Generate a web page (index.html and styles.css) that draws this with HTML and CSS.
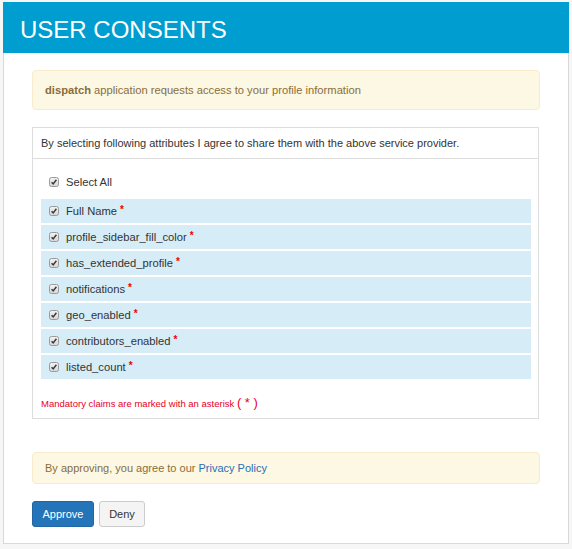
FILE: index.html
```html
<!DOCTYPE html>
<html>
<head>
<meta charset="utf-8">
<link rel="stylesheet" href="styles.css">
</head>
<body>
<div class="page">
  <div class="header"><h1 class="title">USER CONSENTS</h1></div>
  <div class="content">
    <div class="alert alert-top"><b>dispatch</b> application requests access to your profile information</div>
    <div class="panel">
      <div class="panel-heading">By selecting following attributes I agree to share them with the above service provider.</div>
      <div class="panel-body">
        <div class="row row-all">
          <svg class="cb" width="10" height="10" viewBox="0 0 10 10"><defs><linearGradient id="g" x1="0" y1="0" x2="0" y2="1"><stop offset="0" stop-color="#f4f4f4"/><stop offset="1" stop-color="#d6d6d6"/></linearGradient></defs><rect x="0.5" y="0.5" width="9" height="9" rx="2" fill="url(#g)" stroke="#9a9a9a"/><path d="M2.6 5.2 L4.2 6.9 L7.4 2.8" fill="none" stroke="#3a3a3a" stroke-width="1.5"/></svg>
          <span class="lbl">Select All</span>
        </div>
        <div class="row claim"><svg class="cb" width="10" height="10" viewBox="0 0 10 10"><rect x="0.5" y="0.5" width="9" height="9" rx="2" fill="url(#g)" stroke="#9a9a9a"/><path d="M2.6 5.2 L4.2 6.9 L7.4 2.8" fill="none" stroke="#3a3a3a" stroke-width="1.5"/></svg><span class="lbl">Full Name</span><span class="req">*</span></div>
        <div class="row claim"><svg class="cb" width="10" height="10" viewBox="0 0 10 10"><rect x="0.5" y="0.5" width="9" height="9" rx="2" fill="url(#g)" stroke="#9a9a9a"/><path d="M2.6 5.2 L4.2 6.9 L7.4 2.8" fill="none" stroke="#3a3a3a" stroke-width="1.5"/></svg><span class="lbl">profile_sidebar_fill_color</span><span class="req">*</span></div>
        <div class="row claim"><svg class="cb" width="10" height="10" viewBox="0 0 10 10"><rect x="0.5" y="0.5" width="9" height="9" rx="2" fill="url(#g)" stroke="#9a9a9a"/><path d="M2.6 5.2 L4.2 6.9 L7.4 2.8" fill="none" stroke="#3a3a3a" stroke-width="1.5"/></svg><span class="lbl">has_extended_profile</span><span class="req">*</span></div>
        <div class="row claim"><svg class="cb" width="10" height="10" viewBox="0 0 10 10"><rect x="0.5" y="0.5" width="9" height="9" rx="2" fill="url(#g)" stroke="#9a9a9a"/><path d="M2.6 5.2 L4.2 6.9 L7.4 2.8" fill="none" stroke="#3a3a3a" stroke-width="1.5"/></svg><span class="lbl">notifications</span><span class="req">*</span></div>
        <div class="row claim"><svg class="cb" width="10" height="10" viewBox="0 0 10 10"><rect x="0.5" y="0.5" width="9" height="9" rx="2" fill="url(#g)" stroke="#9a9a9a"/><path d="M2.6 5.2 L4.2 6.9 L7.4 2.8" fill="none" stroke="#3a3a3a" stroke-width="1.5"/></svg><span class="lbl">geo_enabled</span><span class="req">*</span></div>
        <div class="row claim"><svg class="cb" width="10" height="10" viewBox="0 0 10 10"><rect x="0.5" y="0.5" width="9" height="9" rx="2" fill="url(#g)" stroke="#9a9a9a"/><path d="M2.6 5.2 L4.2 6.9 L7.4 2.8" fill="none" stroke="#3a3a3a" stroke-width="1.5"/></svg><span class="lbl">contributors_enabled</span><span class="req">*</span></div>
        <div class="row claim"><svg class="cb" width="10" height="10" viewBox="0 0 10 10"><rect x="0.5" y="0.5" width="9" height="9" rx="2" fill="url(#g)" stroke="#9a9a9a"/><path d="M2.6 5.2 L4.2 6.9 L7.4 2.8" fill="none" stroke="#3a3a3a" stroke-width="1.5"/></svg><span class="lbl">listed_count</span><span class="req">*</span></div>
        <div class="mandatory">Mandatory claims are marked with an asterisk <span class="big">( * )</span></div>
      </div>
    </div>
    <div class="alert alert-bottom">By approving, you agree to our <a class="link" href="#">Privacy Policy</a></div>
    <div class="buttons">
      <button class="btn btn-primary">Approve</button>
      <button class="btn btn-default">Deny</button>
    </div>
  </div>
</div>
</body>
</html>
```
FILE: styles.css
```css
* { box-sizing: border-box; }
html, body { margin: 0; padding: 0; }
body {
  background: #f6f6f6;
  font-family: "Liberation Sans", Arial, sans-serif;
  font-size: 11px;
  color: #333;
}
.page {
  width: 566px;
  margin: 2px 0 0 3px;
  background: #fff;
  border: 1px solid #d9d9d9;
  border-top: none;
}
.header {
  background: #009dd0;
  height: 51px;
  margin: 0 -1px;
  padding: 0 0 0 17px;
  display: flex;
  align-items: center;
}
.title {
  margin: 4px 0 0;
  font-size: 24px;
  font-weight: normal;
  color: #fff;
  line-height: 1;
}
.content {
  padding: 17px 28px 16px;
}
.alert {
  background: #fcf8e3;
  border: 1px solid #faebcc;
  border-radius: 4px;
  color: #8a6d3b;
  padding: 0 12px;
}
.alert-top {
  height: 40px;
  line-height: 38px;
  font-size: 11.2px;
}
.alert-top b { font-weight: bold; }
.alert-bottom {
  height: 32px;
  line-height: 30px;
  margin-top: 33px;
}
.link { color: #2a6db5; text-decoration: none; }
.panel {
  margin-top: 17px;
  width: 507px;
  border: 1px solid #dddddd;
  background: #fff;
}
.panel-heading {
  height: 31px;
  line-height: 30px;
  padding: 0 8px;
  border-bottom: 1px solid #dddddd;
  color: #333;
  font-size: 11px;
}
.panel-body {
  padding: 11px 7px 0 8px;
}
.row {
  height: 24px;
  display: flex;
  align-items: center;
  padding-left: 8px;
  margin-bottom: 2px;
}
.row-all { margin-bottom: 5px; }
.claim { background: #d6edf7; }
.cb { flex: none; margin-right: 7px; }
.lbl { font-size: 11.2px; color: #333; }
.req { color: #e00; font-weight: bold; margin-left: 3px; font-size: 10px; position: relative; top: -2px; }
.mandatory {
  margin-top: 16px;
  height: 23px;
  color: #e8001c;
  font-size: 9.5px;
  line-height: 16px;
}
.mandatory .big { font-size: 13px; }
.buttons {
  display: flex;
  gap: 5px;
  margin-top: 17px;
}
.btn {
  font-family: "Liberation Sans", Arial, sans-serif;
  font-size: 11px;
  height: 26px;
  border-radius: 3px;
  border: 1px solid;
  padding: 0;
  cursor: pointer;
}
.btn-primary {
  background: #2374b8;
  border-color: #1f66a3;
  color: #fff;
  width: 62px;
}
.btn-default {
  background: #f4f4f4;
  border-color: #cccccc;
  color: #333;
  width: 46px;
}
```
